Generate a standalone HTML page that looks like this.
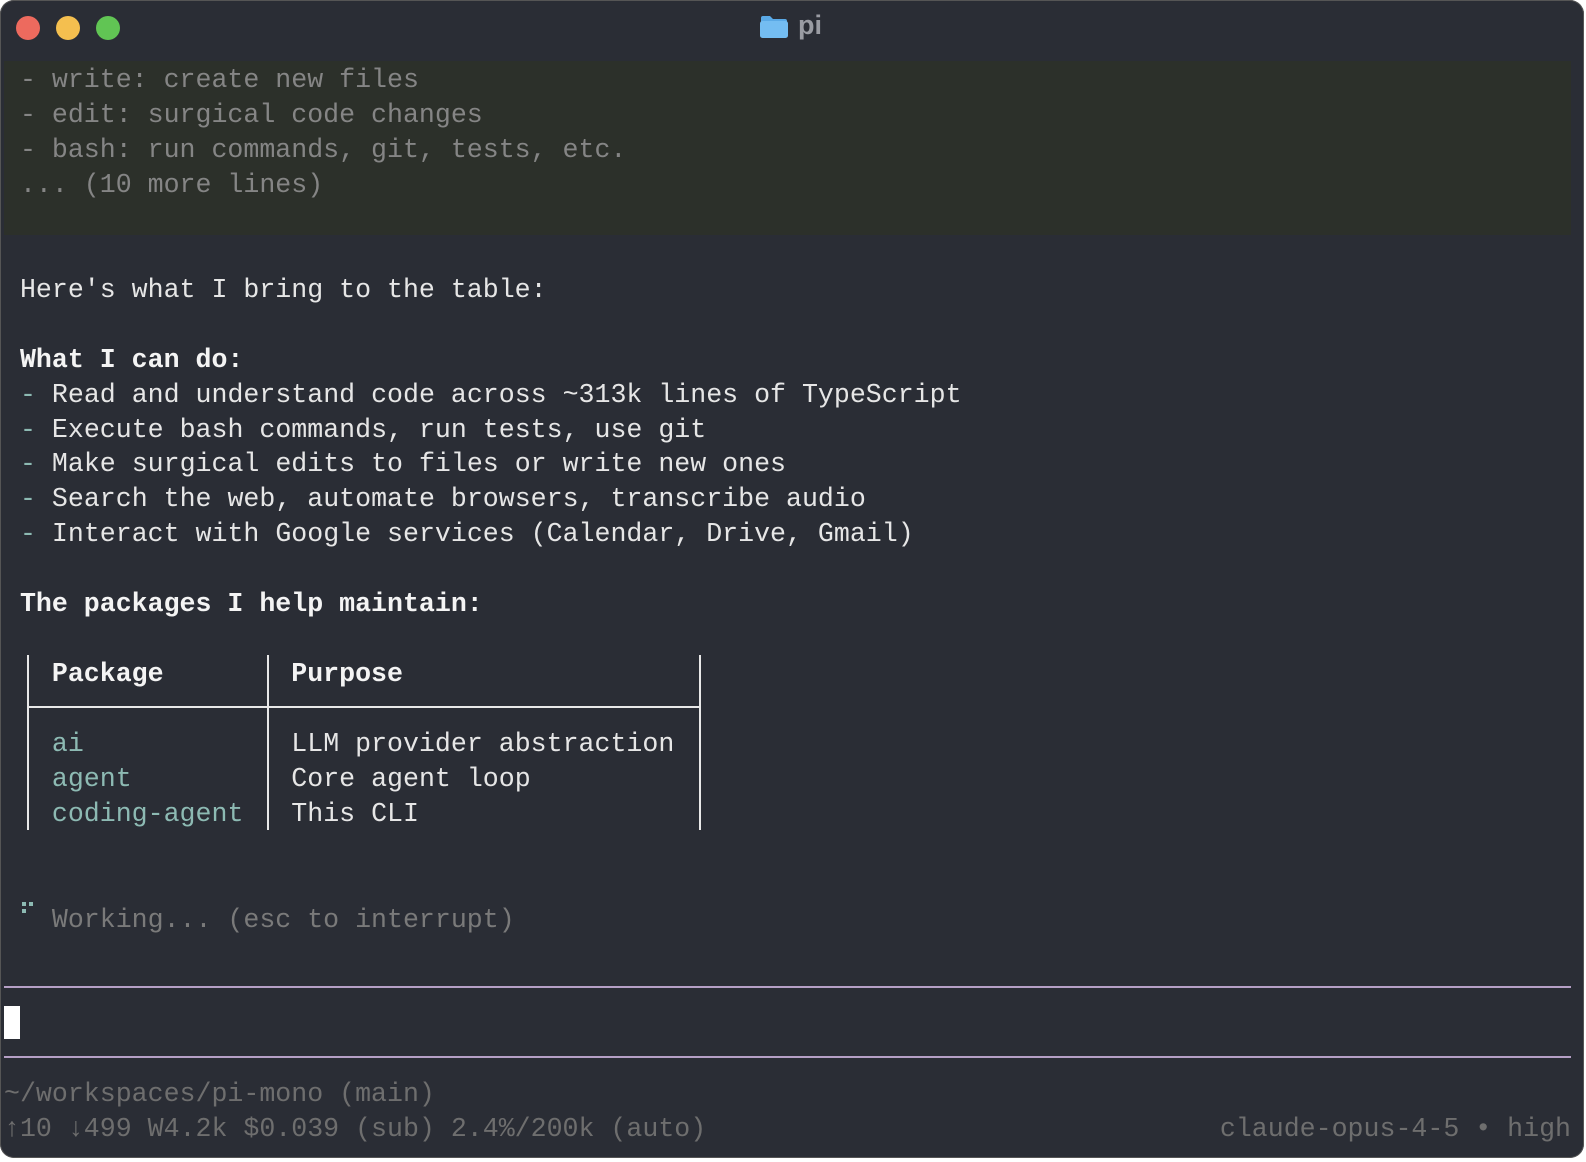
<!DOCTYPE html>
<html><head><meta charset="utf-8"><style>
html,body{margin:0;padding:0;background:#fff;width:1586px;height:1162px;overflow:hidden}
#w{position:absolute;left:0;top:0;width:1584px;height:1158px;background:#2a2d35;border-radius:14px;overflow:hidden;box-shadow:0 0 0 1px #555 inset}
.l{position:absolute;left:4px;height:35px;line-height:35px;font-family:"Liberation Mono",monospace;font-size:26.6px;white-space:pre;color:#e6e6e6;margin-top:2px}
.g{color:#858585}
.b{font-weight:bold;color:#f4f4f4}
.t{color:#8dbab3}
.d{color:#7a7a7a}
.f{color:#6e6e6e}
.dot{position:absolute;width:24px;height:24px;border-radius:50%;top:16px}
.v{position:absolute;width:2px;background:#e8e8e8;top:655px;height:175px}
</style></head><body><div id="w">
<div class="dot" style="left:16px;background:#ed6a5e"></div>
<div class="dot" style="left:56px;background:#f4bf4f"></div>
<div class="dot" style="left:96px;background:#61c554"></div>
<svg style="position:absolute;left:759px;top:15px" width="30" height="24" viewBox="0 0 30 24"><path d="M2 3a2 2 0 0 1 2-2h7l3 3h12a2 2 0 0 1 2 2v2H2z" fill="#5aa9e6"/><rect x="1" y="6" width="28" height="17" rx="2.5" fill="#74bdf2"/></svg>
<div style="position:absolute;left:798px;top:10px;font:bold 27px 'Liberation Sans',sans-serif;color:#9a9ca3">pi</div>
<div style="position:absolute;left:4px;top:61px;width:1567px;height:174px;background:#2c302a"></div>
<div class="l g" style="top:61px"> - write: create new files</div>
<div class="l g" style="top:96px"> - edit: surgical code changes</div>
<div class="l g" style="top:131px"> - bash: run commands, git, tests, etc.</div>
<div class="l g" style="top:166px"> ... (10 more lines)</div>
<div class="l" style="top:271px"> Here's what I bring to the table:</div>
<div class="l b" style="top:341px"> What I can do:</div>
<div class="l" style="top:376px"> <span class="t">-</span> Read and understand code across ~313k lines of TypeScript</div>
<div class="l" style="top:411px"> <span class="t">-</span> Execute bash commands, run tests, use git</div>
<div class="l" style="top:445px"> <span class="t">-</span> Make surgical edits to files or write new ones</div>
<div class="l" style="top:480px"> <span class="t">-</span> Search the web, automate browsers, transcribe audio</div>
<div class="l" style="top:515px"> <span class="t">-</span> Interact with Google services (Calendar, Drive, Gmail)</div>
<div class="l b" style="top:585px"> The packages I help maintain:</div>
<div class="v" style="left:27px"></div>
<div class="v" style="left:267px"></div>
<div class="v" style="left:699px"></div>
<div style="position:absolute;left:28px;top:706px;width:672px;height:2px;background:#e8e8e8"></div>
<div class="l b" style="top:655px">   Package        Purpose</div>
<div class="l" style="top:725px">   <span class="t">ai</span>             LLM provider abstraction</div>
<div class="l" style="top:760px">   <span class="t">agent</span>          Core agent loop</div>
<div class="l" style="top:795px">   <span class="t">coding-agent</span>   This CLI</div>
<div style="position:absolute;left:22px;top:902px;width:4px;height:4px;background:#8dbab3"></div>
<div style="position:absolute;left:29px;top:902px;width:4px;height:4px;background:#8dbab3"></div>
<div style="position:absolute;left:22px;top:909px;width:4px;height:4px;background:#8dbab3"></div>
<div class="l d" style="top:901px">   Working... (esc to interrupt)</div>
<div style="position:absolute;left:4px;top:986px;width:1567px;height:2px;background:#b59fc5"></div>
<div style="position:absolute;left:4px;top:1006px;width:16px;height:33px;background:#fff"></div>
<div style="position:absolute;left:4px;top:1056px;width:1567px;height:2px;background:#b59fc5"></div>
<div class="l f" style="top:1075px">~/workspaces/pi-mono (main)</div>
<div class="l f" style="top:1110px">↑10 ↓499 W4.2k $0.039 (sub) 2.4%/200k (auto)</div>
<div class="l f" style="top:1110px;left:auto;right:13px">claude-opus-4-5 • high</div>
</div></body></html>
